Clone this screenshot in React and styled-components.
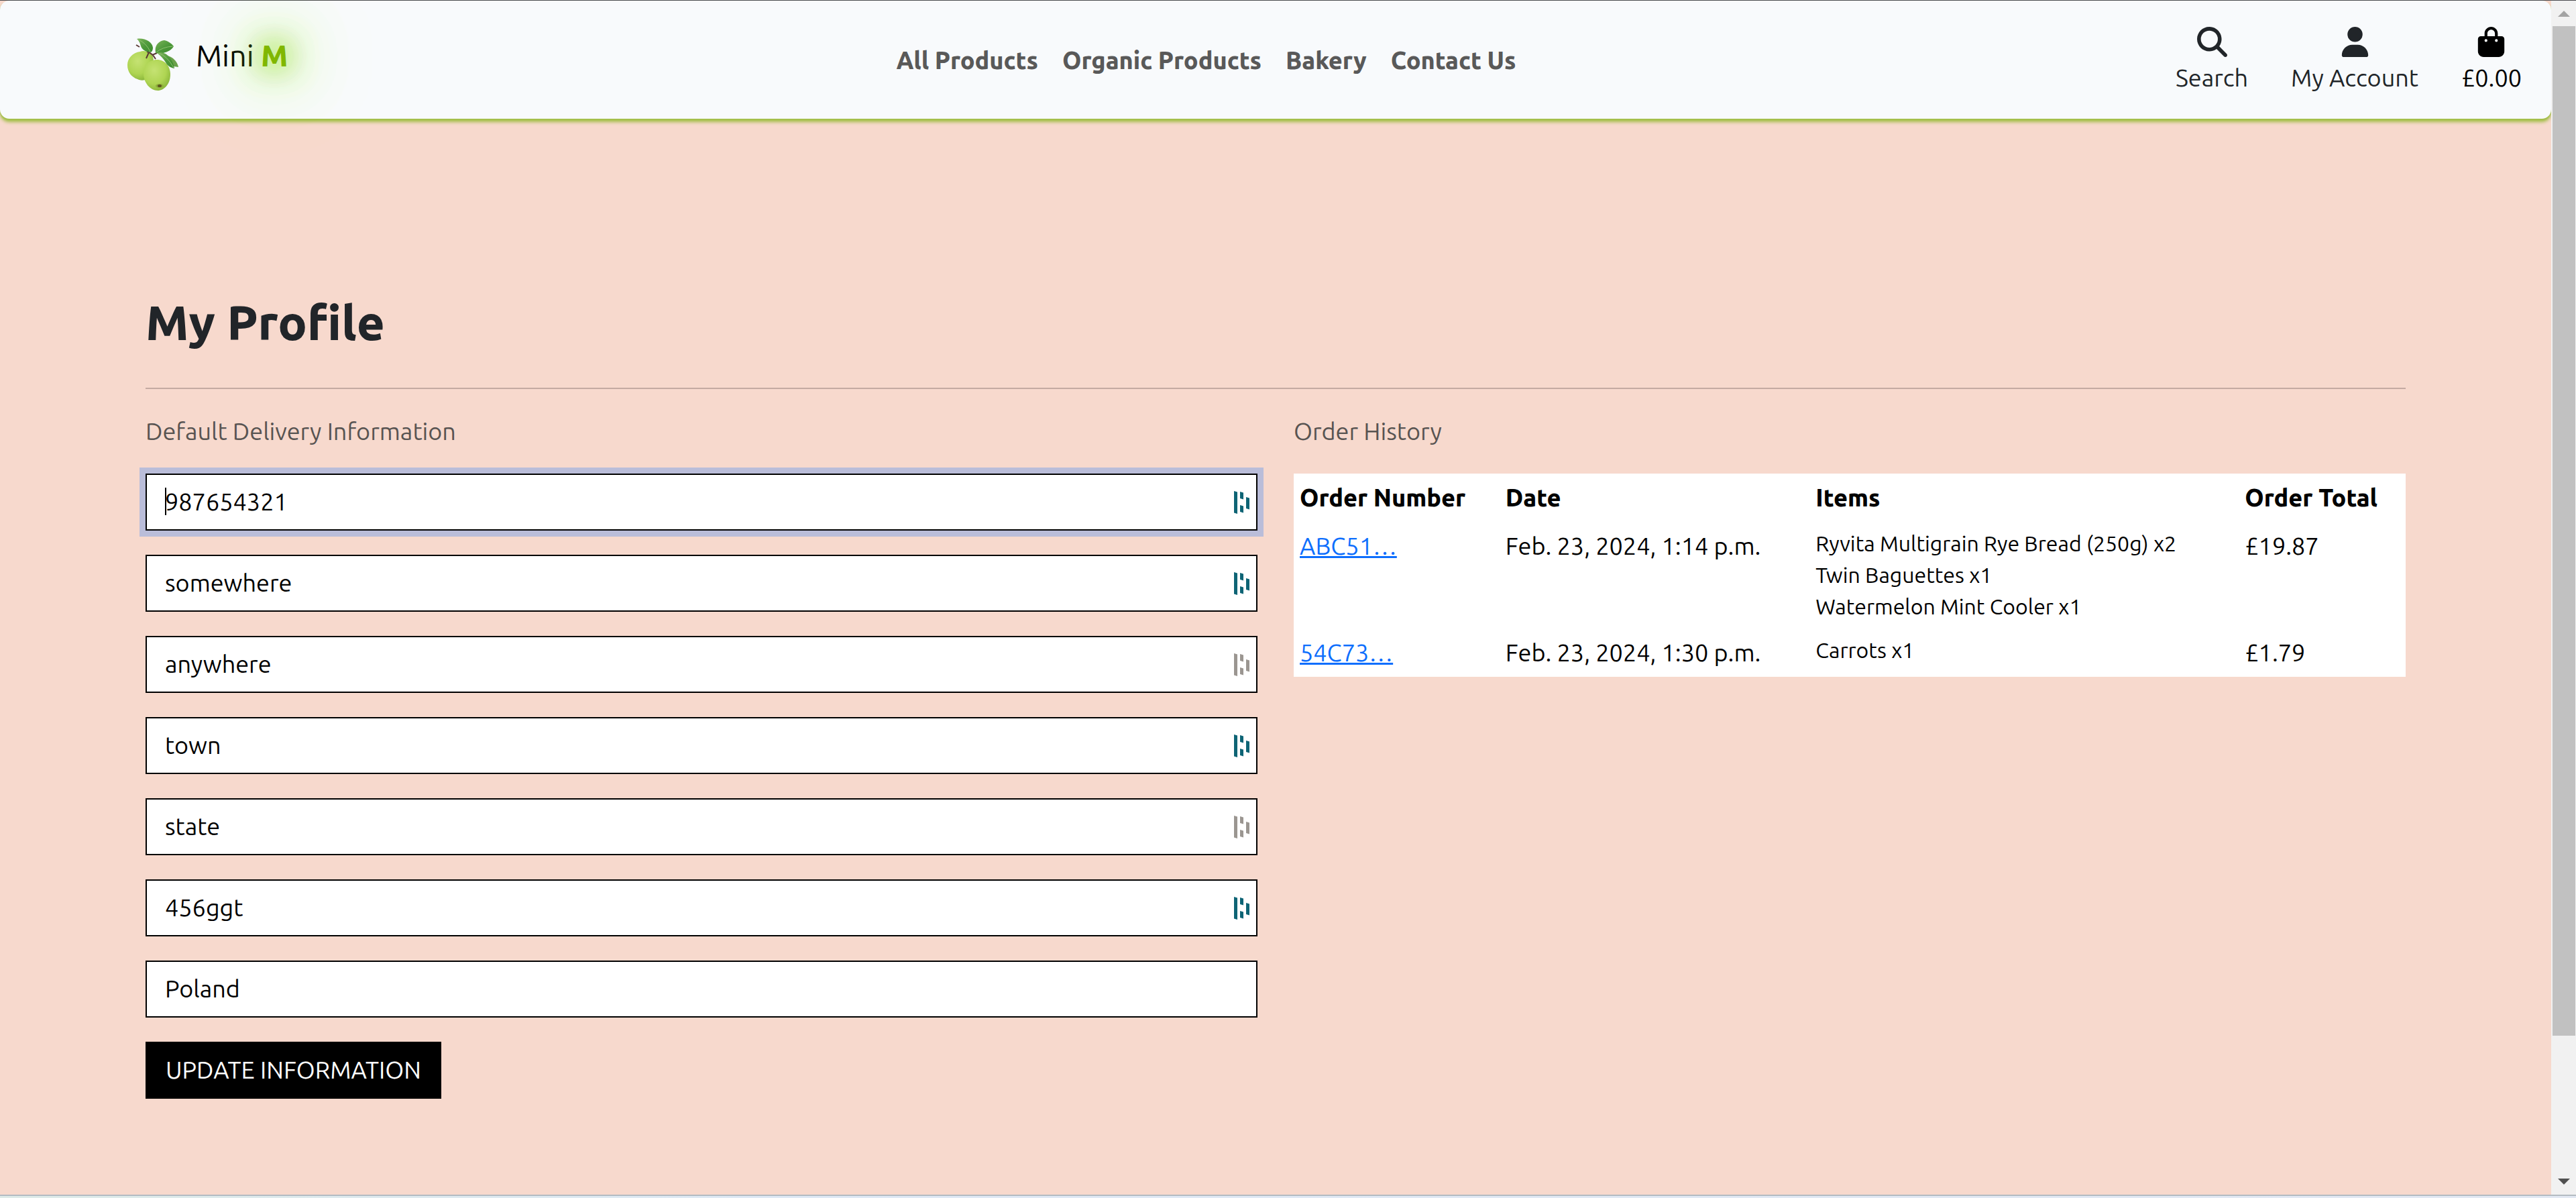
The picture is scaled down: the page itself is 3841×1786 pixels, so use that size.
import React from "react";
import styled, { createGlobalStyle } from "styled-components";
import { FaMagnifyingGlass, FaUser, FaBagShopping } from "react-icons/fa6";

const Global = createGlobalStyle`
  *, *::before, *::after { box-sizing: border-box; }
  html, body, #root { height: 100%; }
  body {
    margin: 0;
    overflow: hidden;
    font: 400 36px/54px Ubuntu, "Noto Sans", sans-serif;
    color: #212529;
    background: #f7d9cd;
  }
`;

const Screen = styled.div`
  height: 100vh;
  display: flex;
  flex-direction: column;
  border-top: 1px solid #4a4a4f;
`;

const Viewport = styled.div`
  flex: 1;
  min-height: 0;
  display: flex;
`;

const Page = styled.div`
  flex: 1;
  min-width: 0;
  background: #f7d9cd;
`;

const Scrollbar = styled.div`
  width: 37px;
  padding: 15px 1px 15px 2px;
  display: flex;
  flex-direction: column;
  align-items: center;
  background: #f1f1f1;
`;

const Thumb = styled.div`
  width: 100%;
  height: 86%;
  margin: 14px 0 auto;
  background: #c1c1c1;
`;

const Arrow = styled.svg`
  width: 18px;
  height: 9px;
  flex: none;
  fill: ${(p) => p.$color};
`;

const Taskbar = styled.div`
  height: 5px;
  border-top: 2px solid #b3bbc2;
  background: linear-gradient(90deg, #dfebe8, #dfe9f5 30%, #e3e9f3);
`;

const Header = styled.header`
  height: 176px;
  padding: 0 44px 0 190px;
  display: grid;
  grid-template-columns: 32% auto 1fr;
  align-items: center;
  background: #f8fafc;
  border-radius: 14px;
  box-shadow: 0 5px 5px #a4bf4a, 0 2px 2px #a4bf4a;
`;

const Brand = styled.a`
  display: flex;
  align-items: center;
  gap: 26px;
  padding-bottom: 12px;
  font-size: 45px;
  color: #000;
  text-decoration: none;
`;

const BrandMark = styled.svg`
  width: 76px;
  height: 78px;
  margin-top: 26px;
`;

const BrandAccent = styled.b`
  font-weight: 800;
  color: #80b700;
  text-shadow: 0 0 45px #90e020, 0 0 45px #a0e838, 0 0 90px #90e020, 0 0 90px #90e020,
    0 0 135px #a8e860, 0 0 180px #c8e890;
`;

const Nav = styled.nav`
  display: flex;
  gap: 36px;
  padding: 2px 0 0 4px;
`;

const NavLink = styled.a`
  font-weight: 800;
  color: #595959;
  text-decoration: none;
`;

const Tools = styled.div`
  display: flex;
  justify-content: flex-end;
  gap: 64px;
`;

const Tool = styled.a`
  display: flex;
  flex-direction: column;
  align-items: center;
  gap: 4px;
  padding-top: 4px;
  color: ${(p) => p.$color || "#212529"};
  text-decoration: none;
  svg { width: 45px; height: 45px; }
`;

const Main = styled.main`
  padding: 256px 217px 0;
`;

const Title = styled.h1`
  margin: 0;
  padding-bottom: 50px;
  font-size: 72px;
  line-height: 95px;
  font-weight: 800;
  border-bottom: 2px solid #c4aaa2;
`;

const Columns = styled.div`
  display: grid;
  grid-template-columns: 1fr 1fr;
  gap: 54px;
  align-items: start;
`;

const Lead = styled.h2`
  margin: 36px 0;
  font-size: 36px;
  font-weight: 400;
  color: #585452;
`;

const Form = styled.form`
  display: flex;
  flex-direction: column;
  align-items: flex-start;
  gap: 36px;
`;

const Field = styled.label`
  position: relative;
  display: block;
  width: 100%;
`;

const controlStyles = `
  display: block;
  width: 100%;
  height: 85px;
  padding: 0 27px 2px;
  border: 2px solid #000;
  border-radius: 0;
  outline: none;
  appearance: none;
  background: #fff;
  color: #000;
  font: inherit;
`;

const Input = styled.input`
  ${controlStyles}
  box-shadow: ${(p) => (p.$active ? "0 0 0 9px #babdd9" : "none")};
`;

const Select = styled.select`
  ${controlStyles}
`;

const Caret = styled.span`
  position: absolute;
  left: 29px;
  top: 21px;
  width: 2px;
  height: 41px;
  background: #000;
`;

const FillMark = styled.svg`
  position: absolute;
  right: 11px;
  top: 26px;
  width: 24px;
  height: 34px;
  fill: ${(p) => (p.$saved ? "#0e6475" : "#9b9691")};
`;

const Submit = styled.button`
  height: 85px;
  padding: 0 30px 2px;
  border: 0;
  background: #000;
  color: #fff;
  font: inherit;
  text-transform: uppercase;
`;

const Table = styled.table`
  width: 100%;
  table-layout: fixed;
  border-collapse: collapse;
  background: #fff;
  color: #000;
`;

const Col = styled.col`
  width: ${(p) => p.$share}%;
`;

const Th = styled.th`
  padding: 9px;
  text-align: left;
  font-weight: 800;
`;

const Td = styled.td`
  padding: 9px;
  vertical-align: top;
`;

const OrderLink = styled.a`
  color: #0d6efd;
  text-decoration-thickness: 3px;
`;

const Items = styled.ul`
  margin: 0;
  padding: 0;
  list-style: none;
  font-size: 32px;
  line-height: 47px;
`;

const fields = [
  { label: "Phone number", value: "987654321", saved: true, active: true },
  { label: "Street address 1", value: "somewhere", saved: true },
  { label: "Street address 2", value: "anywhere", saved: false },
  { label: "Town or city", value: "town", saved: true },
  { label: "County or state", value: "state", saved: false },
  { label: "Postal code", value: "456ggt", saved: true },
];

const orders = [
  {
    number: "ABC51…",
    date: "Feb. 23, 2024, 1:14 p.m.",
    items: ["Ryvita Multigrain Rye Bread (250g) x2", "Twin Baguettes x1", "Watermelon Mint Cooler x1"],
    total: "£19.87",
  },
  { number: "54C73…", date: "Feb. 23, 2024, 1:30 p.m.", items: ["Carrots x1"], total: "£1.79" },
];

function Apples() {
  return (
    <BrandMark viewBox="0 0 76 78" aria-hidden="true">
      <defs>
        <radialGradient id="apple" cx="40%" cy="35%" r="72%">
          <stop offset="0" stopColor="#c5e273" />
          <stop offset="0.6" stopColor="#afd553" />
          <stop offset="1" stopColor="#85b238" />
        </radialGradient>
        <linearGradient id="leaf" x1="0" y1="0" x2="1" y2="1">
          <stop offset="0" stopColor="#7db35a" />
          <stop offset="0.5" stopColor="#4f9a3c" />
          <stop offset="1" stopColor="#3c8a2c" />
        </linearGradient>
      </defs>
      <path d="M19 20c4-2 9-1 13 1 6 3 8 9 6 16L26 62c-3 1-7 1-11-1C6 58 0 50 0 40 0 30 8 21 19 20z" fill="url(#apple)" />
      <path d="M44 32c12 0 20 10 20 22 0 14-9 24-19 24-11 0-21-12-21-25 0-12 8-21 20-21z" fill="url(#apple)" />
      <path d="M13 10l5 3M29 20q8 2 13 11M32 21l-4 9M37 25l7-3" fill="none" stroke="#5b3a35" strokeWidth="2" />
      <ellipse cx="48" cy="71" rx="6" ry="3" fill="#8fac3a" />
      <ellipse cx="48" cy="71" rx="3" ry="2" fill="#5b561f" />
      <path d="M14 1c11-2 23 4 24 13q0 5-3 7c-5-1-10-1-14-7-2-4-2-9-7-13z" fill="url(#leaf)" />
      <path d="M42 21C40 12 46 4 55 3c5 1 10 4 14 9-4 7-14 12-27 10z" fill="url(#leaf)" />
      <path d="M60 26c7 2 14 8 16 17l-7-1z" fill="#6aa14a" />
      <path d="M44 22c8-2 14 0 20 8q5 7 6 15c-5-1-10-3-13-9-3-5-7-10-13-14z" fill="url(#leaf)" />
      <path d="M16 2q12 5 18 18M43 21q9-8 25-9M46 22q13 4 23 22" fill="none" stroke="#8fc070" strokeWidth="1" />
    </BrandMark>
  );
}

function AutofillMark({ saved }) {
  return (
    <FillMark $saved={saved} viewBox="0 0 24 34" aria-hidden="true">
      <path d="M0 0l5 1.500v32.500l-5-1.500zM9 1l5 1.500v10l-5-1.500zM9 21l5 1.500v10l-5-1.500zM18 9l5 1.500v17l-5-1.500z" />
    </FillMark>
  );
}

export default function App() {
  return (
    <Screen>
      <Global />
      <Viewport>
        <Page>
          <Header>
            <Brand href="#">
              <Apples />
              <span>
                Mini <BrandAccent>M</BrandAccent>
              </span>
            </Brand>
            <Nav>
              {["All Products", "Organic Products", "Bakery", "Contact Us"].map((t) => (
                <NavLink key={t} href="#">{t}</NavLink>
              ))}
            </Nav>
            <Tools>
              <Tool href="#"><FaMagnifyingGlass />Search</Tool>
              <Tool href="#"><FaUser />My Account</Tool>
              <Tool href="#" $color="#000"><FaBagShopping />£0.00</Tool>
            </Tools>
          </Header>
          <Main>
            <Title>My Profile</Title>
            <Columns>
              <section>
                <Lead>Default Delivery Information</Lead>
                <Form onSubmit={(e) => e.preventDefault()}>
                  {fields.map((f) => (
                    <Field key={f.label}>
                      <Input aria-label={f.label} defaultValue={f.value} $active={f.active} />
                      {f.active && <Caret />}
                      <AutofillMark saved={f.saved} />
                    </Field>
                  ))}
                  <Field>
                    <Select aria-label="Country" defaultValue="Poland">
                      <option>Poland</option>
                    </Select>
                  </Field>
                  <Submit>Update Information</Submit>
                </Form>
              </section>
              <section>
                <Lead>Order History</Lead>
                <Table>
                  <colgroup>
                    <Col $share={18.5} />
                    <Col $share={27.9} />
                    <Col $share={38.6} />
                    <Col $share={15} />
                  </colgroup>
                  <thead>
                    <tr>
                      <Th>Order Number</Th>
                      <Th>Date</Th>
                      <Th>Items</Th>
                      <Th>Order Total</Th>
                    </tr>
                  </thead>
                  <tbody>
                    {orders.map((o) => (
                      <tr key={o.number}>
                        <Td><OrderLink href="#">{o.number}</OrderLink></Td>
                        <Td>{o.date}</Td>
                        <Td>
                          <Items>{o.items.map((i) => <li key={i}>{i}</li>)}</Items>
                        </Td>
                        <Td>{o.total}</Td>
                      </tr>
                    ))}
                  </tbody>
                </Table>
              </section>
            </Columns>
          </Main>
        </Page>
        <Scrollbar aria-hidden="true">
          <Arrow $color="#a3a3a3" viewBox="0 0 18 9"><path d="M9 0l9 9H0z" /></Arrow>
          <Thumb />
          <Arrow $color="#505050" viewBox="0 0 18 9"><path d="M0 0h18L9 9z" /></Arrow>
        </Scrollbar>
      </Viewport>
      <Taskbar />
    </Screen>
  );
}
